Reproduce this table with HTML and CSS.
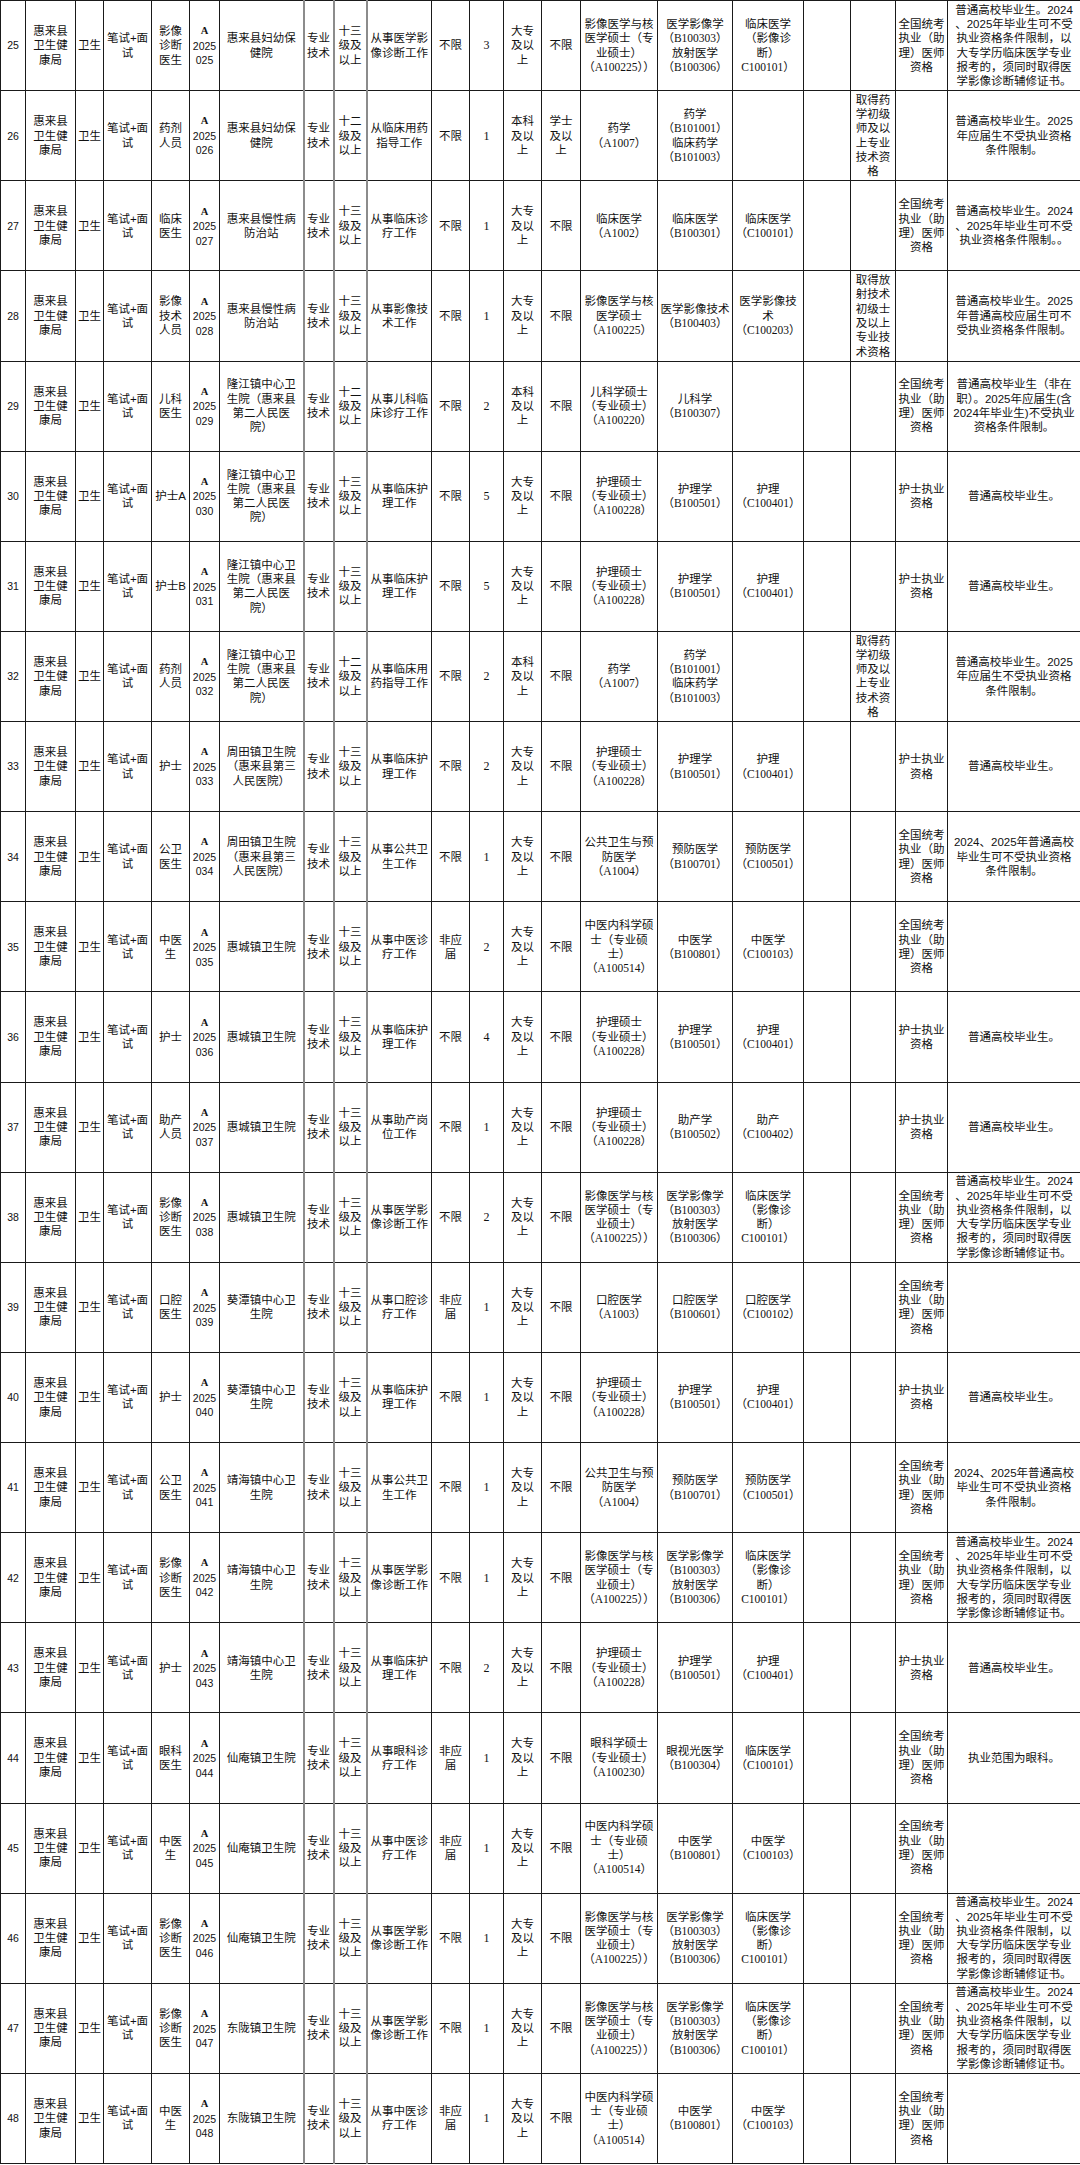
FILE: index.html
```html
<!DOCTYPE html>
<html lang="zh-CN">
<head>
<meta charset="utf-8">
<title>惠来县卫生健康局 招聘岗位表</title>
<link rel="stylesheet" href="styles.css">
</head>
<body>
<table class="grid">
<colgroup>
<col class="w25"><col class="w50"><col class="w28"><col class="w48"><col class="w38"><col class="w30"><col class="w84"><col class="w30"><col class="w33"><col class="w65"><col class="w38"><col class="w34"><col class="w38"><col class="w39"><col class="w77"><col class="w75"><col class="w71"><col class="w47"><col class="w45"><col class="w52"><col class="w133">
</colgroup>
<tbody>
<tr>
<td class="idx">25</td><td>惠来县<br>卫生健<br>康局</td><td>卫生</td><td>笔试+面<br>试</td><td>影像<br>诊断<br>医生</td><td class="code"><b>A</b><br>2025<br>025</td><td>惠来县妇幼保<br>健院</td><td class="g">专业<br>技术</td><td class="g">十三<br>级及<br>以上</td><td>从事医学影<br>像诊断工作</td><td>不限</td><td class="num">3</td><td>大专<br>及以<br>上</td><td>不限</td>
<td>影像医学与核<br>医学硕士（专<br>业硕士）<br><span class="mc">（A100225））</span></td><td>医学影像学<br><span class="mc">（B100303）</span><br>放射医学<br><span class="mc">（B100306）</span></td><td>临床医学<br>（影像诊<br>断）<br><span class="mc">C100101）</span></td><td></td><td></td><td>全国统考<br>执业（助<br>理）医师<br>资格</td><td>普通高校毕业生。2024<br>、2025年毕业生可不受<br>执业资格条件限制，以<br>大专学历临床医学专业<br>报考的，须同时取得医<br>学影像诊断辅修证书。</td>
</tr>
<tr>
<td class="idx">26</td><td>惠来县<br>卫生健<br>康局</td><td>卫生</td><td>笔试+面<br>试</td><td>药剂<br>人员</td><td class="code"><b>A</b><br>2025<br>026</td><td>惠来县妇幼保<br>健院</td><td class="g">专业<br>技术</td><td class="g">十二<br>级及<br>以上</td><td>从临床用药<br>指导工作</td><td>不限</td><td class="num">1</td><td>本科<br>及以<br>上</td><td>学士<br>及以<br>上</td>
<td>药学<br><span class="mc">（A1007）</span></td><td>药学<br><span class="mc">（B101001）</span><br>临床药学<br><span class="mc">（B101003）</span></td><td></td><td></td><td>取得药<br>学初级<br>师及以<br>上专业<br>技术资<br>格</td><td></td><td>普通高校毕业生。2025<br>年应届生不受执业资格<br>条件限制。</td>
</tr>
<tr>
<td class="idx">27</td><td>惠来县<br>卫生健<br>康局</td><td>卫生</td><td>笔试+面<br>试</td><td>临床<br>医生</td><td class="code"><b>A</b><br>2025<br>027</td><td>惠来县慢性病<br>防治站</td><td class="g">专业<br>技术</td><td class="g">十三<br>级及<br>以上</td><td>从事临床诊<br>疗工作</td><td>不限</td><td class="num">1</td><td>大专<br>及以<br>上</td><td>不限</td>
<td>临床医学<br><span class="mc">（A1002）</span></td><td>临床医学<br><span class="mc">（B100301）</span></td><td>临床医学<br><span class="mc">（C100101）</span></td><td></td><td></td><td>全国统考<br>执业（助<br>理）医师<br>资格</td><td>普通高校毕业生。2024<br>、2025年毕业生可不受<br>执业资格条件限制。。</td>
</tr>
<tr>
<td class="idx">28</td><td>惠来县<br>卫生健<br>康局</td><td>卫生</td><td>笔试+面<br>试</td><td>影像<br>技术<br>人员</td><td class="code"><b>A</b><br>2025<br>028</td><td>惠来县慢性病<br>防治站</td><td class="g">专业<br>技术</td><td class="g">十三<br>级及<br>以上</td><td>从事影像技<br>术工作</td><td>不限</td><td class="num">1</td><td>大专<br>及以<br>上</td><td>不限</td>
<td>影像医学与核<br>医学硕士<br><span class="mc">（A100225）</span></td><td>医学影像技术<br><span class="mc">（B100403）</span></td><td>医学影像技<br>术<br><span class="mc">（C100203）</span></td><td></td><td>取得放<br>射技术<br>初级士<br>及以上<br>专业技<br>术资格</td><td></td><td>普通高校毕业生。2025<br>年普通高校应届生可不<br>受执业资格条件限制。</td>
</tr>
<tr>
<td class="idx">29</td><td>惠来县<br>卫生健<br>康局</td><td>卫生</td><td>笔试+面<br>试</td><td>儿科<br>医生</td><td class="code"><b>A</b><br>2025<br>029</td><td>隆江镇中心卫<br>生院（惠来县<br>第二人民医<br>院）</td><td class="g">专业<br>技术</td><td class="g">十二<br>级及<br>以上</td><td>从事儿科临<br>床诊疗工作</td><td>不限</td><td class="num">2</td><td>本科<br>及以<br>上</td><td>不限</td>
<td>儿科学硕士<br>（专业硕士）<br><span class="mc">（A100220）</span></td><td>儿科学<br><span class="mc">（B100307）</span></td><td></td><td></td><td></td><td>全国统考<br>执业（助<br>理）医师<br>资格</td><td>普通高校毕业生（非在<br>职）。2025年应届生(含<br>2024年毕业生)不受执业<br>资格条件限制。</td>
</tr>
<tr>
<td class="idx">30</td><td>惠来县<br>卫生健<br>康局</td><td>卫生</td><td>笔试+面<br>试</td><td>护士A</td><td class="code"><b>A</b><br>2025<br>030</td><td>隆江镇中心卫<br>生院（惠来县<br>第二人民医<br>院）</td><td class="g">专业<br>技术</td><td class="g">十三<br>级及<br>以上</td><td>从事临床护<br>理工作</td><td>不限</td><td class="num">5</td><td>大专<br>及以<br>上</td><td>不限</td>
<td>护理硕士<br>（专业硕士）<br><span class="mc">（A100228）</span></td><td>护理学<br><span class="mc">（B100501）</span></td><td>护理<br><span class="mc">（C100401）</span></td><td></td><td></td><td>护士执业<br>资格</td><td>普通高校毕业生。</td>
</tr>
<tr>
<td class="idx">31</td><td>惠来县<br>卫生健<br>康局</td><td>卫生</td><td>笔试+面<br>试</td><td>护士B</td><td class="code"><b>A</b><br>2025<br>031</td><td>隆江镇中心卫<br>生院（惠来县<br>第二人民医<br>院）</td><td class="g">专业<br>技术</td><td class="g">十三<br>级及<br>以上</td><td>从事临床护<br>理工作</td><td>不限</td><td class="num">5</td><td>大专<br>及以<br>上</td><td>不限</td>
<td>护理硕士<br>（专业硕士）<br><span class="mc">（A100228）</span></td><td>护理学<br><span class="mc">（B100501）</span></td><td>护理<br><span class="mc">（C100401）</span></td><td></td><td></td><td>护士执业<br>资格</td><td>普通高校毕业生。</td>
</tr>
<tr>
<td class="idx">32</td><td>惠来县<br>卫生健<br>康局</td><td>卫生</td><td>笔试+面<br>试</td><td>药剂<br>人员</td><td class="code"><b>A</b><br>2025<br>032</td><td>隆江镇中心卫<br>生院（惠来县<br>第二人民医<br>院）</td><td class="g">专业<br>技术</td><td class="g">十二<br>级及<br>以上</td><td>从事临床用<br>药指导工作</td><td>不限</td><td class="num">2</td><td>本科<br>及以<br>上</td><td>不限</td>
<td>药学<br><span class="mc">（A1007）</span></td><td>药学<br><span class="mc">（B101001）</span><br>临床药学<br><span class="mc">（B101003）</span></td><td></td><td></td><td>取得药<br>学初级<br>师及以<br>上专业<br>技术资<br>格</td><td></td><td>普通高校毕业生。2025<br>年应届生不受执业资格<br>条件限制。</td>
</tr>
<tr>
<td class="idx">33</td><td>惠来县<br>卫生健<br>康局</td><td>卫生</td><td>笔试+面<br>试</td><td>护士</td><td class="code"><b>A</b><br>2025<br>033</td><td>周田镇卫生院<br>（惠来县第三<br>人民医院）</td><td class="g">专业<br>技术</td><td class="g">十三<br>级及<br>以上</td><td>从事临床护<br>理工作</td><td>不限</td><td class="num">2</td><td>大专<br>及以<br>上</td><td>不限</td>
<td>护理硕士<br>（专业硕士）<br><span class="mc">（A100228）</span></td><td>护理学<br><span class="mc">（B100501）</span></td><td>护理<br><span class="mc">（C100401）</span></td><td></td><td></td><td>护士执业<br>资格</td><td>普通高校毕业生。</td>
</tr>
<tr>
<td class="idx">34</td><td>惠来县<br>卫生健<br>康局</td><td>卫生</td><td>笔试+面<br>试</td><td>公卫<br>医生</td><td class="code"><b>A</b><br>2025<br>034</td><td>周田镇卫生院<br>（惠来县第三<br>人民医院）</td><td class="g">专业<br>技术</td><td class="g">十三<br>级及<br>以上</td><td>从事公共卫<br>生工作</td><td>不限</td><td class="num">1</td><td>大专<br>及以<br>上</td><td>不限</td>
<td>公共卫生与预<br>防医学<br><span class="mc">（A1004）</span></td><td>预防医学<br><span class="mc">（B100701）</span></td><td>预防医学<br><span class="mc">（C100501）</span></td><td></td><td></td><td>全国统考<br>执业（助<br>理）医师<br>资格</td><td>2024、2025年普通高校<br>毕业生可不受执业资格<br>条件限制。</td>
</tr>
<tr>
<td class="idx">35</td><td>惠来县<br>卫生健<br>康局</td><td>卫生</td><td>笔试+面<br>试</td><td>中医<br>生</td><td class="code"><b>A</b><br>2025<br>035</td><td>惠城镇卫生院</td><td class="g">专业<br>技术</td><td class="g">十三<br>级及<br>以上</td><td>从事中医诊<br>疗工作</td><td>非应<br>届</td><td class="num">2</td><td>大专<br>及以<br>上</td><td>不限</td>
<td>中医内科学硕<br>士（专业硕<br>士）<br><span class="mc">（A100514）</span></td><td>中医学<br><span class="mc">（B100801）</span></td><td>中医学<br><span class="mc">（C100103）</span></td><td></td><td></td><td>全国统考<br>执业（助<br>理）医师<br>资格</td><td></td>
</tr>
<tr>
<td class="idx">36</td><td>惠来县<br>卫生健<br>康局</td><td>卫生</td><td>笔试+面<br>试</td><td>护士</td><td class="code"><b>A</b><br>2025<br>036</td><td>惠城镇卫生院</td><td class="g">专业<br>技术</td><td class="g">十三<br>级及<br>以上</td><td>从事临床护<br>理工作</td><td>不限</td><td class="num">4</td><td>大专<br>及以<br>上</td><td>不限</td>
<td>护理硕士<br>（专业硕士）<br><span class="mc">（A100228）</span></td><td>护理学<br><span class="mc">（B100501）</span></td><td>护理<br><span class="mc">（C100401）</span></td><td></td><td></td><td>护士执业<br>资格</td><td>普通高校毕业生。</td>
</tr>
<tr>
<td class="idx">37</td><td>惠来县<br>卫生健<br>康局</td><td>卫生</td><td>笔试+面<br>试</td><td>助产<br>人员</td><td class="code"><b>A</b><br>2025<br>037</td><td>惠城镇卫生院</td><td class="g">专业<br>技术</td><td class="g">十三<br>级及<br>以上</td><td>从事助产岗<br>位工作</td><td>不限</td><td class="num">1</td><td>大专<br>及以<br>上</td><td>不限</td>
<td>护理硕士<br>（专业硕士）<br><span class="mc">（A100228）</span></td><td>助产学<br><span class="mc">（B100502）</span></td><td>助产<br><span class="mc">（C100402）</span></td><td></td><td></td><td>护士执业<br>资格</td><td>普通高校毕业生。</td>
</tr>
<tr>
<td class="idx">38</td><td>惠来县<br>卫生健<br>康局</td><td>卫生</td><td>笔试+面<br>试</td><td>影像<br>诊断<br>医生</td><td class="code"><b>A</b><br>2025<br>038</td><td>惠城镇卫生院</td><td class="g">专业<br>技术</td><td class="g">十三<br>级及<br>以上</td><td>从事医学影<br>像诊断工作</td><td>不限</td><td class="num">2</td><td>大专<br>及以<br>上</td><td>不限</td>
<td>影像医学与核<br>医学硕士（专<br>业硕士）<br><span class="mc">（A100225））</span></td><td>医学影像学<br><span class="mc">（B100303）</span><br>放射医学<br><span class="mc">（B100306）</span></td><td>临床医学<br>（影像诊<br>断）<br><span class="mc">C100101）</span></td><td></td><td></td><td>全国统考<br>执业（助<br>理）医师<br>资格</td><td>普通高校毕业生。2024<br>、2025年毕业生可不受<br>执业资格条件限制，以<br>大专学历临床医学专业<br>报考的，须同时取得医<br>学影像诊断辅修证书。</td>
</tr>
<tr>
<td class="idx">39</td><td>惠来县<br>卫生健<br>康局</td><td>卫生</td><td>笔试+面<br>试</td><td>口腔<br>医生</td><td class="code"><b>A</b><br>2025<br>039</td><td>葵潭镇中心卫<br>生院</td><td class="g">专业<br>技术</td><td class="g">十三<br>级及<br>以上</td><td>从事口腔诊<br>疗工作</td><td>非应<br>届</td><td class="num">1</td><td>大专<br>及以<br>上</td><td>不限</td>
<td>口腔医学<br><span class="mc">（A1003）</span></td><td>口腔医学<br><span class="mc">（B100601）</span></td><td>口腔医学<br><span class="mc">（C100102）</span></td><td></td><td></td><td>全国统考<br>执业（助<br>理）医师<br>资格</td><td></td>
</tr>
<tr>
<td class="idx">40</td><td>惠来县<br>卫生健<br>康局</td><td>卫生</td><td>笔试+面<br>试</td><td>护士</td><td class="code"><b>A</b><br>2025<br>040</td><td>葵潭镇中心卫<br>生院</td><td class="g">专业<br>技术</td><td class="g">十三<br>级及<br>以上</td><td>从事临床护<br>理工作</td><td>不限</td><td class="num">1</td><td>大专<br>及以<br>上</td><td>不限</td>
<td>护理硕士<br>（专业硕士）<br><span class="mc">（A100228）</span></td><td>护理学<br><span class="mc">（B100501）</span></td><td>护理<br><span class="mc">（C100401）</span></td><td></td><td></td><td>护士执业<br>资格</td><td>普通高校毕业生。</td>
</tr>
<tr>
<td class="idx">41</td><td>惠来县<br>卫生健<br>康局</td><td>卫生</td><td>笔试+面<br>试</td><td>公卫<br>医生</td><td class="code"><b>A</b><br>2025<br>041</td><td>靖海镇中心卫<br>生院</td><td class="g">专业<br>技术</td><td class="g">十三<br>级及<br>以上</td><td>从事公共卫<br>生工作</td><td>不限</td><td class="num">1</td><td>大专<br>及以<br>上</td><td>不限</td>
<td>公共卫生与预<br>防医学<br><span class="mc">（A1004）</span></td><td>预防医学<br><span class="mc">（B100701）</span></td><td>预防医学<br><span class="mc">（C100501）</span></td><td></td><td></td><td>全国统考<br>执业（助<br>理）医师<br>资格</td><td>2024、2025年普通高校<br>毕业生可不受执业资格<br>条件限制。</td>
</tr>
<tr>
<td class="idx">42</td><td>惠来县<br>卫生健<br>康局</td><td>卫生</td><td>笔试+面<br>试</td><td>影像<br>诊断<br>医生</td><td class="code"><b>A</b><br>2025<br>042</td><td>靖海镇中心卫<br>生院</td><td class="g">专业<br>技术</td><td class="g">十三<br>级及<br>以上</td><td>从事医学影<br>像诊断工作</td><td>不限</td><td class="num">1</td><td>大专<br>及以<br>上</td><td>不限</td>
<td>影像医学与核<br>医学硕士（专<br>业硕士）<br><span class="mc">（A100225））</span></td><td>医学影像学<br><span class="mc">（B100303）</span><br>放射医学<br><span class="mc">（B100306）</span></td><td>临床医学<br>（影像诊<br>断）<br><span class="mc">C100101）</span></td><td></td><td></td><td>全国统考<br>执业（助<br>理）医师<br>资格</td><td>普通高校毕业生。2024<br>、2025年毕业生可不受<br>执业资格条件限制，以<br>大专学历临床医学专业<br>报考的，须同时取得医<br>学影像诊断辅修证书。</td>
</tr>
<tr>
<td class="idx">43</td><td>惠来县<br>卫生健<br>康局</td><td>卫生</td><td>笔试+面<br>试</td><td>护士</td><td class="code"><b>A</b><br>2025<br>043</td><td>靖海镇中心卫<br>生院</td><td class="g">专业<br>技术</td><td class="g">十三<br>级及<br>以上</td><td>从事临床护<br>理工作</td><td>不限</td><td class="num">2</td><td>大专<br>及以<br>上</td><td>不限</td>
<td>护理硕士<br>（专业硕士）<br><span class="mc">（A100228）</span></td><td>护理学<br><span class="mc">（B100501）</span></td><td>护理<br><span class="mc">（C100401）</span></td><td></td><td></td><td>护士执业<br>资格</td><td>普通高校毕业生。</td>
</tr>
<tr>
<td class="idx">44</td><td>惠来县<br>卫生健<br>康局</td><td>卫生</td><td>笔试+面<br>试</td><td>眼科<br>医生</td><td class="code"><b>A</b><br>2025<br>044</td><td>仙庵镇卫生院</td><td class="g">专业<br>技术</td><td class="g">十三<br>级及<br>以上</td><td>从事眼科诊<br>疗工作</td><td>非应<br>届</td><td class="num">1</td><td>大专<br>及以<br>上</td><td>不限</td>
<td>眼科学硕士<br>（专业硕士）<br><span class="mc">（A100230）</span></td><td>眼视光医学<br><span class="mc">（B100304）</span></td><td>临床医学<br><span class="mc">（C100101）</span></td><td></td><td></td><td>全国统考<br>执业（助<br>理）医师<br>资格</td><td>执业范围为眼科。</td>
</tr>
<tr>
<td class="idx">45</td><td>惠来县<br>卫生健<br>康局</td><td>卫生</td><td>笔试+面<br>试</td><td>中医<br>生</td><td class="code"><b>A</b><br>2025<br>045</td><td>仙庵镇卫生院</td><td class="g">专业<br>技术</td><td class="g">十三<br>级及<br>以上</td><td>从事中医诊<br>疗工作</td><td>非应<br>届</td><td class="num">1</td><td>大专<br>及以<br>上</td><td>不限</td>
<td>中医内科学硕<br>士（专业硕<br>士）<br><span class="mc">（A100514）</span></td><td>中医学<br><span class="mc">（B100801）</span></td><td>中医学<br><span class="mc">（C100103）</span></td><td></td><td></td><td>全国统考<br>执业（助<br>理）医师<br>资格</td><td></td>
</tr>
<tr>
<td class="idx">46</td><td>惠来县<br>卫生健<br>康局</td><td>卫生</td><td>笔试+面<br>试</td><td>影像<br>诊断<br>医生</td><td class="code"><b>A</b><br>2025<br>046</td><td>仙庵镇卫生院</td><td class="g">专业<br>技术</td><td class="g">十三<br>级及<br>以上</td><td>从事医学影<br>像诊断工作</td><td>不限</td><td class="num">1</td><td>大专<br>及以<br>上</td><td>不限</td>
<td>影像医学与核<br>医学硕士（专<br>业硕士）<br><span class="mc">（A100225））</span></td><td>医学影像学<br><span class="mc">（B100303）</span><br>放射医学<br><span class="mc">（B100306）</span></td><td>临床医学<br>（影像诊<br>断）<br><span class="mc">C100101）</span></td><td></td><td></td><td>全国统考<br>执业（助<br>理）医师<br>资格</td><td>普通高校毕业生。2024<br>、2025年毕业生可不受<br>执业资格条件限制，以<br>大专学历临床医学专业<br>报考的，须同时取得医<br>学影像诊断辅修证书。</td>
</tr>
<tr>
<td class="idx">47</td><td>惠来县<br>卫生健<br>康局</td><td>卫生</td><td>笔试+面<br>试</td><td>影像<br>诊断<br>医生</td><td class="code"><b>A</b><br>2025<br>047</td><td>东陇镇卫生院</td><td class="g">专业<br>技术</td><td class="g">十三<br>级及<br>以上</td><td>从事医学影<br>像诊断工作</td><td>不限</td><td class="num">1</td><td>大专<br>及以<br>上</td><td>不限</td>
<td>影像医学与核<br>医学硕士（专<br>业硕士）<br><span class="mc">（A100225））</span></td><td>医学影像学<br><span class="mc">（B100303）</span><br>放射医学<br><span class="mc">（B100306）</span></td><td>临床医学<br>（影像诊<br>断）<br><span class="mc">C100101）</span></td><td></td><td></td><td>全国统考<br>执业（助<br>理）医师<br>资格</td><td>普通高校毕业生。2024<br>、2025年毕业生可不受<br>执业资格条件限制，以<br>大专学历临床医学专业<br>报考的，须同时取得医<br>学影像诊断辅修证书。</td>
</tr>
<tr>
<td class="idx">48</td><td>惠来县<br>卫生健<br>康局</td><td>卫生</td><td>笔试+面<br>试</td><td>中医<br>生</td><td class="code"><b>A</b><br>2025<br>048</td><td>东陇镇卫生院</td><td class="g">专业<br>技术</td><td class="g">十三<br>级及<br>以上</td><td>从事中医诊<br>疗工作</td><td>非应<br>届</td><td class="num">1</td><td>大专<br>及以<br>上</td><td>不限</td>
<td>中医内科学硕<br>士（专业硕<br>士）<br><span class="mc">（A100514）</span></td><td>中医学<br><span class="mc">（B100801）</span></td><td>中医学<br><span class="mc">（C100103）</span></td><td></td><td></td><td>全国统考<br>执业（助<br>理）医师<br>资格</td><td></td>
</tr>
</tbody>
</table>
</body>
</html>
```

FILE: styles.css
```css
html, body {
  margin: 0;
  padding: 0;
  background: #ffffff;
}

.grid {
  border-collapse: collapse;
  table-layout: fixed;
  width: 1080px;
  font-family: "Liberation Sans", "Noto Sans CJK SC", sans-serif;
  font-size: 11.5px;
  line-height: 14.3px;
  color: #111111;
}

.grid tr {
  height: 90.125px;
}

.grid td {
  border: 1px solid #1a1a1a;
  padding: 0;
  text-align: center;
  vertical-align: middle;
  white-space: nowrap;
  overflow: visible;
}

.grid td.g {
  border-left: 2px solid #8c8c8c;
  border-right: 2px solid #8c8c8c;
}

.idx {
  font-size: 10.5px;
}

.code {
  font-size: 10.5px;
  line-height: 14.5px;
}

.code b {
  font-family: "Liberation Serif", serif;
  font-weight: 700;
  font-size: 10.5px;
}

.num {
  font-family: "Liberation Serif", "Noto Sans CJK SC", serif;
  font-size: 12px;
}

.mc {
  font-family: "Liberation Serif", "Noto Sans CJK SC", serif;
  font-size: 11.5px;
}

.w25 { width: 25px; }
.w50 { width: 50px; }
.w28 { width: 28px; }
.w48 { width: 48px; }
.w38 { width: 38px; }
.w30 { width: 30px; }
.w84 { width: 84px; }
.w33 { width: 33px; }
.w65 { width: 65px; }
.w34 { width: 34px; }
.w39 { width: 39px; }
.w77 { width: 77px; }
.w75 { width: 75px; }
.w71 { width: 71px; }
.w47 { width: 47px; }
.w45 { width: 45px; }
.w52 { width: 52px; }
.w133 { width: 133px; }
```
